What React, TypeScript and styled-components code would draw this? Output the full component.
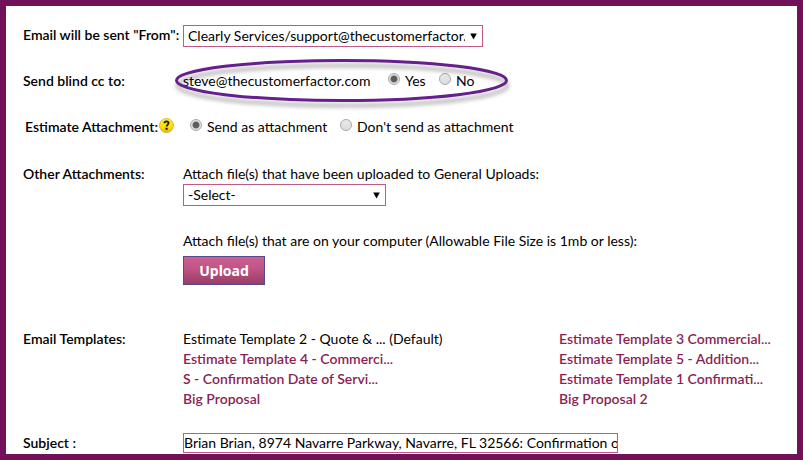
import React, { useId } from 'react';
import styled, { createGlobalStyle } from 'styled-components';

const GlobalStyle = createGlobalStyle`
  *, *::before, *::after { box-sizing: border-box; }
  body {
    margin: 0;
    background: #fff;
    color: #000;
    font-family: Lato, "Liberation Sans", sans-serif;
    font-size: 14px;
    line-height: 20px;
  }
  input, select, button { font: inherit; color: inherit; margin: 0; }
`;

const Frame = styled.main`
  min-height: 100vh;
  border: 6px solid #73105a;
  padding: 19px 17px 1px;
`;

const Form = styled.form`
  display: flex;
  flex-direction: column;
`;

const Row = styled.div<{ $gap?: number }>`
  display: grid;
  grid-template-columns: 160px minmax(0, 1fr);
  align-items: start;
  margin-top: ${({ $gap = 0 }) => $gap}px;
`;

const Label = styled.label<{ $indent?: boolean }>`
  font-weight: 600;
  white-space: nowrap;
  padding-left: ${({ $indent }) => ($indent ? 2 : 0)}px;
`;

const LabelGroup = styled.div`
  display: flex;
  justify-content: space-between;
  align-items: flex-start;
  padding-right: 9px;
`;

const HelpButton = styled.button`
  display: flex;
  padding: 0;
  border: 0;
  background: none;
`;

const Field = styled.div`
  display: flex;
  flex-direction: column;
  align-items: flex-start;
`;

const SelectBox = styled.div<{ $width: number }>`
  display: grid;
  align-items: center;
  width: ${({ $width }) => $width}px;
  max-width: 100%;

  > * { grid-area: 1 / 1; }
  > svg { justify-self: end; margin-right: 6px; pointer-events: none; }
`;

const Select = styled.select`
  appearance: none;
  width: 100%;
  height: 22px;
  padding: 0 17px 0 4px;
  border: 1px solid #bf5a88;
  border-radius: 0;
  background: #fff;
`;

const Options = styled.div<{ $inset?: boolean }>`
  display: flex;
  position: relative;
  padding-left: ${({ $inset }) => ($inset ? 7 : 0)}px;
`;

const Address = styled.span`
  width: 205px;
`;

const Choice = styled.label<{ $width?: number }>`
  display: flex;
  align-items: flex-start;
  gap: 5px;
  width: ${({ $width }) => ($width ? `${$width}px` : 'auto')};
  white-space: nowrap;
`;

const Radio = styled.input.attrs({ type: 'radio' })`
  appearance: none;
  flex: none;
  width: 12px;
  height: 12px;
  margin-top: 2px;
  border: 1px solid #a9a9a9;
  border-radius: 50%;
  background: linear-gradient(#e9e9e9, #dcdcdc);

  &:checked {
    background: radial-gradient(circle, #5c5c5c 0 2px, #666 3px, #e2e2e2 4px);
  }
`;

const Highlight = styled.svg`
  position: absolute;
  left: -8px;
  top: -13px;
  width: 340px;
  height: 56px;
  pointer-events: none;
  overflow: visible;
  filter: drop-shadow(1px 5px 2px rgba(0, 0, 0, 0.35));
`;

const Hint = styled.p<{ $gap?: number }>`
  margin: ${({ $gap = 0 }) => $gap}px 0 0;
`;

const Upload = styled.button`
  width: 82px;
  height: 29px;
  margin-top: 5px;
  padding: 0;
  border: 1px solid #574a8c;
  background: linear-gradient(#cb6293, #c05484 45%, #983c68);
  color: #fff;
  font-family: "Noto Sans", sans-serif;
  font-size: 14px;
  font-weight: 700;
`;

const Templates = styled.ul`
  display: grid;
  grid-template-columns: 376px minmax(0, 1fr);
  margin: 0;
  padding: 0;
  list-style: none;
  white-space: nowrap;
`;

const TemplateLink = styled.a`
  color: #8a1f55;
  font-weight: 600;
  text-decoration: none;
`;

const Subject = styled.input`
  width: 435px;
  max-width: 100%;
  height: 20px;
  padding: 0;
  border: 1px solid #bf5a88;
  border-radius: 0;
  background: #fff;
`;

const Arrow = () => (
  <svg width="7" height="7" viewBox="0 0 7 7" aria-hidden="true">
    <path d="M0.2 0.5H6.8L3.5 6.5Z" fill="#000" />
  </svg>
);

const HelpIcon = () => (
  <svg width="15" height="16" viewBox="0 0 15 16" aria-hidden="true">
    <defs>
      <linearGradient id="help-fill" x1="0" y1="0" x2="0" y2="1">
        <stop offset="0" stopColor="#fff22e" />
        <stop offset="0.6" stopColor="#fbe000" />
        <stop offset="1" stopColor="#e9b800" />
      </linearGradient>
    </defs>
    <circle cx="7.5" cy="8.5" r="7" fill="url(#help-fill)" stroke="#cfa53a" strokeWidth="0.8" />
    <path d="M5.4 6.2C5.5 4.9 6.4 4.4 7.5 4.4C8.8 4.4 9.6 5.1 9.6 6.1C9.6 7.6 7.6 7.6 7.6 9.6" fill="none" stroke="#1c1800" strokeWidth="1.8" />
    <rect x="6.6" y="10.8" width="2" height="2" fill="#1c1800" />
  </svg>
);

type Template = { name: string; current?: boolean };

const templates: Template[] = [
  { name: 'Estimate Template 2 - Quote & ... (Default)', current: true },
  { name: 'Estimate Template 3 Commercial...' },
  { name: 'Estimate Template 4 - Commerci...' },
  { name: 'Estimate Template 5 - Addition...' },
  { name: 'S - Confirmation Date of Servi...' },
  { name: 'Estimate Template 1 Confirmati...' },
  { name: 'Big Proposal' },
  { name: 'Big Proposal 2' },
];

export default function App() {
  const id = useId();
  return (
    <>
      <GlobalStyle />
      <Frame>
        <Form onSubmit={(e) => e.preventDefault()}>
          <Row>
            <Label htmlFor={`${id}-from`}>Email will be sent "From":</Label>
            <SelectBox $width={300}>
              <Select id={`${id}-from`}>
                <option>Clearly Services/support@thecustomerfactor.com</option>
              </Select>
              <Arrow />
            </SelectBox>
          </Row>

          <Row $gap={24} role="radiogroup" aria-labelledby={`${id}-cc`}>
            <Label as="span" id={`${id}-cc`}>Send blind cc to:</Label>
            <Options>
              <Address>steve@thecustomerfactor.com</Address>
              <Choice $width={51}><Radio name="cc" defaultChecked />Yes</Choice>
              <Choice><Radio name="cc" />No</Choice>
              <Highlight viewBox="0 0 340 56" aria-hidden="true">
                <ellipse cx="166.5" cy="22.5" rx="165" ry="20" fill="none" stroke="#65208c" strokeWidth="3" />
              </Highlight>
            </Options>
          </Row>

          <Row $gap={26} role="radiogroup" aria-labelledby={`${id}-estimate`}>
            <LabelGroup>
              <Label as="span" $indent id={`${id}-estimate`}>Estimate Attachment:</Label>
              <HelpButton type="button" aria-label="Help"><HelpIcon /></HelpButton>
            </LabelGroup>
            <Options $inset>
              <Choice $width={150}><Radio name="estimate" defaultChecked />Send as attachment</Choice>
              <Choice><Radio name="estimate" />Don't send as attachment</Choice>
            </Options>
          </Row>

          <Row $gap={27}>
            <Label htmlFor={`${id}-uploads`}>Other Attachments:</Label>
            <Field>
              <Hint>Attach file(s) that have been uploaded to General Uploads:</Hint>
              <SelectBox $width={203}>
                <Select id={`${id}-uploads`}>
                  <option>-Select-</option>
                </Select>
                <Arrow />
              </SelectBox>
              <Hint $gap={25}>Attach file(s) that are on your computer (Allowable File Size is 1mb or less):</Hint>
              <Upload type="button">Upload</Upload>
            </Field>
          </Row>

          <Row $gap={44}>
            <Label as="span">Email Templates:</Label>
            <Templates>
              {templates.map(({ name, current }) => (
                <li key={name}>{current ? name : <TemplateLink href="#">{name}</TemplateLink>}</li>
              ))}
            </Templates>
          </Row>

          <Row $gap={24}>
            <Label htmlFor={`${id}-subject`}>Subject :</Label>
            <Subject
              id={`${id}-subject`}
              type="text"
              defaultValue="Brian Brian, 8974 Navarre Parkway, Navarre, FL 32566: Confirmation of Quote"
            />
          </Row>
        </Form>
      </Frame>
    </>
  );
}
